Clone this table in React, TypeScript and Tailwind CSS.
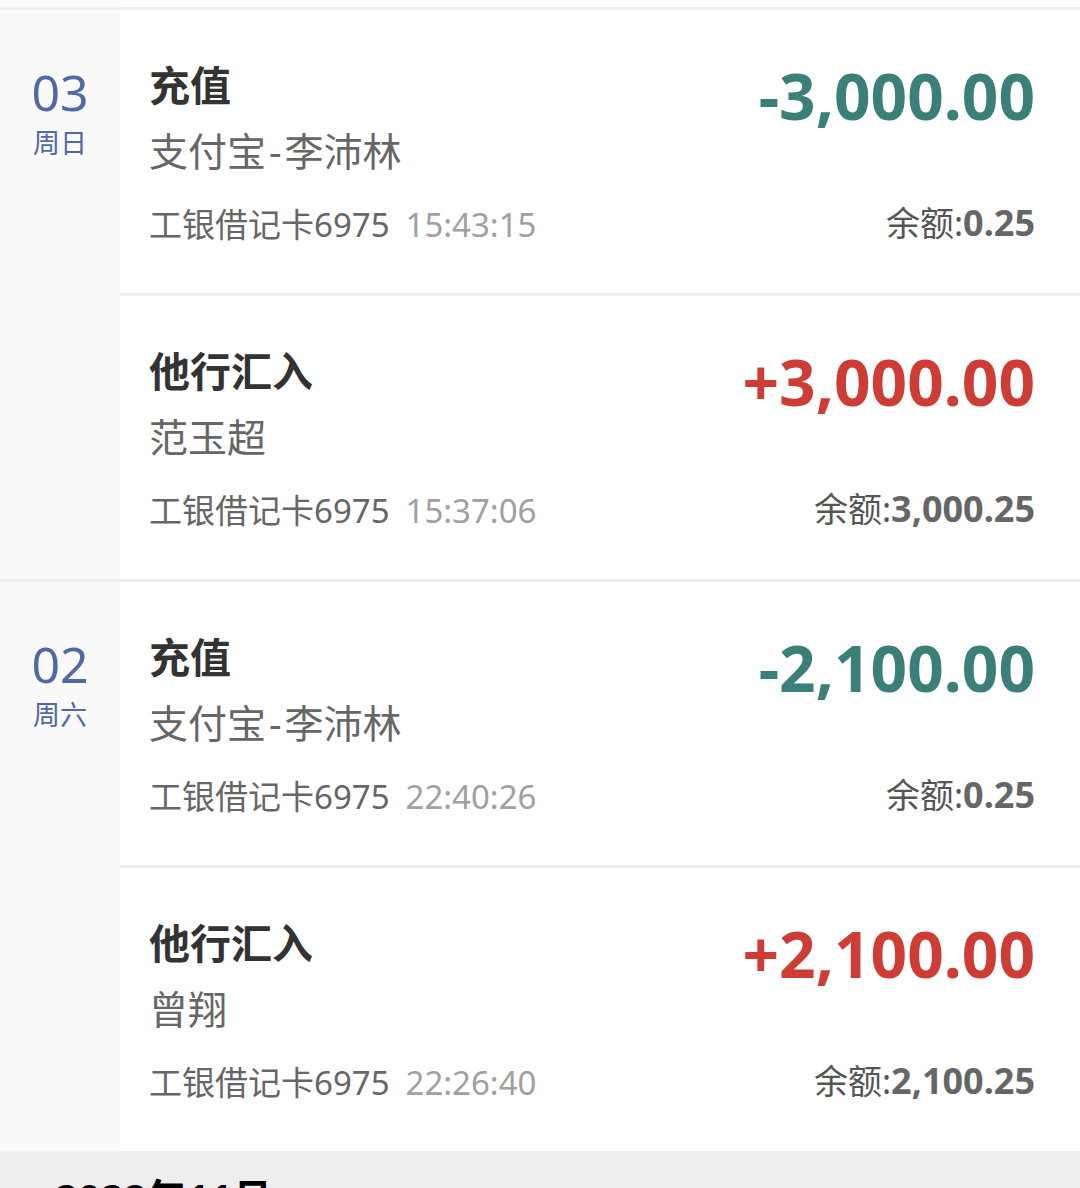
const font = { fontFamily: '"Noto Sans", "Noto Sans CJK SC", sans-serif' };

interface Entry {
  title: string;
  payee: string;
  card: string;
  time: string;
  amount: string;
  balance: string;
  income: boolean;
}

interface Day {
  day: string;
  week: string;
  entries: Entry[];
}

const days: Day[] = [
  {
    day: "03",
    week: "周日",
    entries: [
      { title: "充值", payee: "支付宝-李沛林", card: "工银借记卡6975", time: "15:43:15", amount: "-3,000.00", balance: "0.25", income: false },
      { title: "他行汇入", payee: "范玉超", card: "工银借记卡6975", time: "15:37:06", amount: "+3,000.00", balance: "3,000.25", income: true },
    ],
  },
  {
    day: "02",
    week: "周六",
    entries: [
      { title: "充值", payee: "支付宝-李沛林", card: "工银借记卡6975", time: "22:40:26", amount: "-2,100.00", balance: "0.25", income: false },
      { title: "他行汇入", payee: "曾翔", card: "工银借记卡6975", time: "22:26:40", amount: "+2,100.00", balance: "2,100.25", income: true },
    ],
  },
];

// "支付宝-李沛林" -> give the dash a bit more room like the original
const Payee = ({ text }: { text: string }) => {
  const parts = text.split("-");
  if (parts.length < 2) return <>{text}</>;
  return (
    <>
      {parts[0]}
      <span className="px-[3px]">-</span>
      {parts[1]}
    </>
  );
};

const Row = ({ e }: { e: Entry }) => (
  <div className="flex h-[283px] justify-between pl-[29px] pr-[45px]">
    <div className="flex flex-col">
      <div className="mt-[55px] text-[41px] font-bold leading-[41px] text-[#333333]">{e.title}</div>
      <div className="mt-[25px] text-[39px] leading-[39px] text-[#666666]">
        <Payee text={e.payee} />
      </div>
      <div className="mt-[38px] whitespace-nowrap text-[33px] leading-[33px] text-[#666666]">
        {e.card}
        <span className="ml-[16px] text-[#a0a0a0]">{e.time}</span>
      </div>
    </div>
    <div className="flex flex-col items-end">
      <div
        className={`mt-[54px] text-[64px] font-bold leading-[64px] ${e.income ? "text-[#cd3d35]" : "text-[#3a8079]"}`}
      >
        {e.amount}
      </div>
      <div className="mt-[78px] whitespace-nowrap text-[34px] leading-[33px] text-[#555555]">
        余额:<span className="text-[36px] font-bold text-[#666666]">{e.balance}</span>
      </div>
    </div>
  </div>
);

const App = () => {
  return (
    <div className="h-[1188px] w-[1080px] overflow-hidden bg-white" style={font}>
      <div className="flex h-[7px]">
        <div className="w-[120px] bg-[#fafafa]" />
        <div className="flex-1 bg-white" />
      </div>
      <div className="h-[3px] bg-[#eeeeee]" />
      {days.map((d, i) => (
        <div key={d.day}>
          <div className="flex">
            <div className="flex w-[120px] flex-col items-center bg-[#fafafa] pt-[57px] text-[#5068a8]">
              <div className="text-[50px] leading-[50px]">{d.day}</div>
              <div className="mt-[12px] text-[27px] leading-[27px]">{d.week}</div>
            </div>
            <div className="flex-1">
              {d.entries.map((e, j) => (
                <div key={j}>
                  {j > 0 && <div className="h-[3px] bg-[#eeeeee]" />}
                  <Row e={e} />
                </div>
              ))}
            </div>
          </div>
          {i < days.length - 1 && <div className="h-[3px] bg-[#eeeeee]" />}
        </div>
      ))}
      <div className="h-[60px] bg-[#eeeeee] pl-[55px] pt-[27px]">
        <div className="text-[40px] font-bold leading-[40px] text-black">2022年11月</div>
      </div>
    </div>
  );
};

export default App;
